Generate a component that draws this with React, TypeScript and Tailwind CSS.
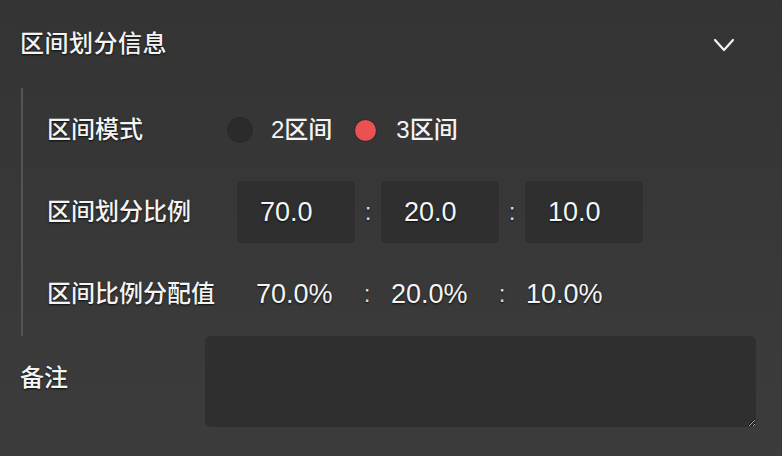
import React, { useState } from 'react';

const font = { fontFamily: '"Liberation Sans", "Noto Sans CJK SC", sans-serif' };

const ratios = ['70.0', '20.0', '10.0'];
const percents = ['70.0%', '20.0%', '10.0%'];

export default function App() {
  const [mode, setMode] = useState(3);
  const [note, setNote] = useState('');

  return (
    <div
      style={font}
      className="w-[782px] h-[456px] overflow-hidden bg-linear-to-b from-[#343434] to-[#3c3c3c] text-[#f4f4f4] font-medium [text-shadow:0_1px_2px_rgba(0,0,0,0.8)]"
    >
      {/* header */}
      <div className="h-[88px] flex items-center justify-between pl-[20px] pr-[47px]">
        <span className="text-[24px] leading-none tracking-[0.5px]">区间划分信息</span>
        <svg width="22" height="16" viewBox="0 0 22 16" fill="none" className="mt-[1px]">
          <polyline points="2,3 11,13 20,3" stroke="#f2f2f2" strokeWidth="2.2" strokeLinecap="round" strokeLinejoin="round" />
        </svg>
      </div>

      {/* section */}
      <div className="ml-[21px] h-[248px] border-l-[2px] border-[#545454] pl-[24px] flex flex-col">
        <div className="h-[84px] flex items-center">
          <span className="w-[180px] text-[24px] leading-none">区间模式</span>
          {[2, 3].map((n) => (
            <button
              key={n}
              onClick={() => setMode(n)}
              className="flex items-center mr-[20px]"
            >
              <span className="w-[26px] h-[26px] flex items-center justify-center">
                {mode === n ? (
                  <span className="w-[21px] h-[21px] rounded-full bg-[#ec5151] shadow-[0_0_2px_rgba(0,0,0,0.6)]" />
                ) : (
                  <span className="w-[26px] h-[26px] rounded-full bg-[#2b2b2b]" />
                )}
              </span>
              <span className="ml-[18px] text-[24px] leading-none">{n}区间</span>
            </button>
          ))}
        </div>

        <div className="h-[80px] flex items-center">
          <span className="w-[190px] text-[24px] leading-none">区间划分比例</span>
          {ratios.map((r, i) => (
            <React.Fragment key={r}>
              {i > 0 && <span className="w-[26px] text-center text-[24px] text-[#dcdcdc] leading-none">:</span>}
              <div className="w-[118px] h-[62px] rounded-[4px] bg-[#2f2f2f] flex items-center pl-[23px] text-[27px]">
                {r}
              </div>
            </React.Fragment>
          ))}
        </div>

        <div className="h-[84px] flex items-center">
          <span className="w-[209px] text-[24px] leading-none">区间比例分配值</span>
          {percents.map((p, i) => (
            <React.Fragment key={p}>
              {i > 0 && <span className="w-[14px] mr-[17px] text-center text-[24px] text-[#dcdcdc] leading-none">:</span>}
              <span className={i < 2 ? 'w-[104px] text-[27px] leading-none' : 'text-[27px] leading-none'}>{p}</span>
            </React.Fragment>
          ))}
        </div>
      </div>

      {/* remark */}
      <div className="flex items-center pl-[20px]">
        <span className="w-[185px] mb-[8px] text-[24px] leading-none">备注</span>
        <textarea
          value={note}
          onChange={(e) => setNote(e.target.value)}
          className="w-[551px] h-[91px] rounded-[6px] bg-[#2f2f2f] outline-none px-3 py-2 text-[18px] text-[#f2f2f2] [color-scheme:dark]"
        />
      </div>
    </div>
  );
}
